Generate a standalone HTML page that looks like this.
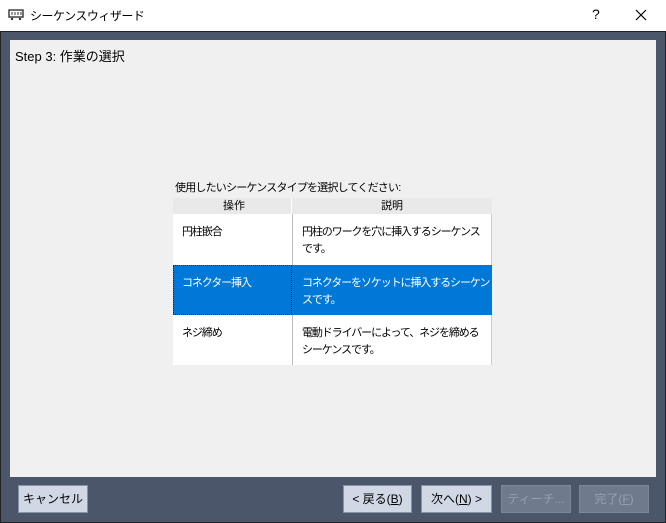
<html><head><style>
body{margin:0;width:666px;height:523px;background:#fff;font-family:"Liberation Sans","Noto Sans CJK JP",sans-serif;position:relative;overflow:hidden}
.a{position:absolute;white-space:nowrap}
.t{font-size:12px;color:#000}
.btn{position:absolute;top:485px;height:28px;background:#d0d7e5;border:1px solid #8a93a3;box-sizing:border-box;font-size:12px;text-align:center;line-height:26px;color:#000}
.dis{background:#6f7a8d;color:#95a0b2;border-color:#7d879a}
.c{font-size:11px;letter-spacing:-1.1px;line-height:17px}
</style></head><body>
<div class="a" style="left:0;top:0;width:666px;height:31px;background:#fff"></div>
<svg class="a" style="left:8px;top:9px" width="16" height="12"><rect x="1" y="1" width="14" height="7" fill="none" stroke="#333" stroke-width="1.4"/><path d="M4 3v3M7 3v3M10 3v3M13 3v3" stroke="#333"/><circle cx="4" cy="10" r="1.2" fill="#333"/><circle cx="12" cy="10" r="1.2" fill="#333"/></svg>
<div class="a t" style="left:30px;top:7px;font-size:12px;letter-spacing:-0.5px">シーケンスウィザード</div>
<div class="a t" style="left:592px;top:6px;font-size:14px">?</div>
<svg class="a" style="left:635px;top:9px" width="12" height="12"><path d="M1 1L11 11M11 1L1 11" stroke="#000" stroke-width="1.2"/></svg>
<div class="a" style="left:0;top:31px;width:666px;height:492px;background:#4b566b;border:1px solid #222;box-sizing:border-box"></div>
<div class="a" style="left:10px;top:40px;width:646px;height:437px;background:#f0f0f0"></div>
<div class="a t" style="left:15px;top:46px;font-size:13px">Step 3: 作業の選択</div>
<div class="a t c" style="left:175px;top:180px;letter-spacing:-0.8px">使用したいシーケンスタイプを選択してください:</div>
<div class="a" style="left:173px;top:198px;width:319px;height:167px;background:#fff">
<div class="a" style="left:0;top:0;width:319px;height:16px;background:#e9e9e9;font-size:11px;line-height:16px">
<span class="a" style="left:50px">操作</span><span class="a" style="left:208px">説明</span></div>
<div class="a" style="left:118px;top:0;width:1px;height:16px;background:#fff"></div>
<div class="a" style="left:119px;top:16px;width:1px;height:151px;background:#bbb"></div>
<div class="a" style="left:318px;top:16px;width:1px;height:151px;background:#ccc"></div>
<div class="a" style="left:0;top:67px;width:319px;height:50px;background:#0078d7"></div>
<div class="a" style="left:0;top:67px;width:119px;height:50px;border:1px dotted #0a2a55;box-sizing:border-box"></div>
<div class="a c" style="left:9px;top:26px">円柱嵌合</div>
<div class="a c" style="left:129px;top:26px">円柱のワークを穴に挿入するシーケンス<br>です。</div>
<div class="a c" style="left:9px;top:77px;color:#fff">コネクター挿入</div>
<div class="a c" style="left:129px;top:77px;color:#fff">コネクターをソケットに挿入するシーケン<br>スです。</div>
<div class="a c" style="left:9px;top:127px">ネジ締め</div>
<div class="a c" style="left:129px;top:127px">電動ドライバーによって、ネジを締める<br>シーケンスです。</div>
</div>
<div class="btn" style="left:18px;width:70px">キャンセル</div>
<div class="btn" style="left:343px;width:69px">&lt; 戻る(<u>B</u>)</div>
<div class="btn" style="left:421px;width:71px">次へ(<u>N</u>) &gt;</div>
<div class="btn dis" style="left:501px;width:70px">ティーチ...</div>
<div class="btn dis" style="left:579px;width:70px">完了(<u>F</u>)</div>
</body></html>
